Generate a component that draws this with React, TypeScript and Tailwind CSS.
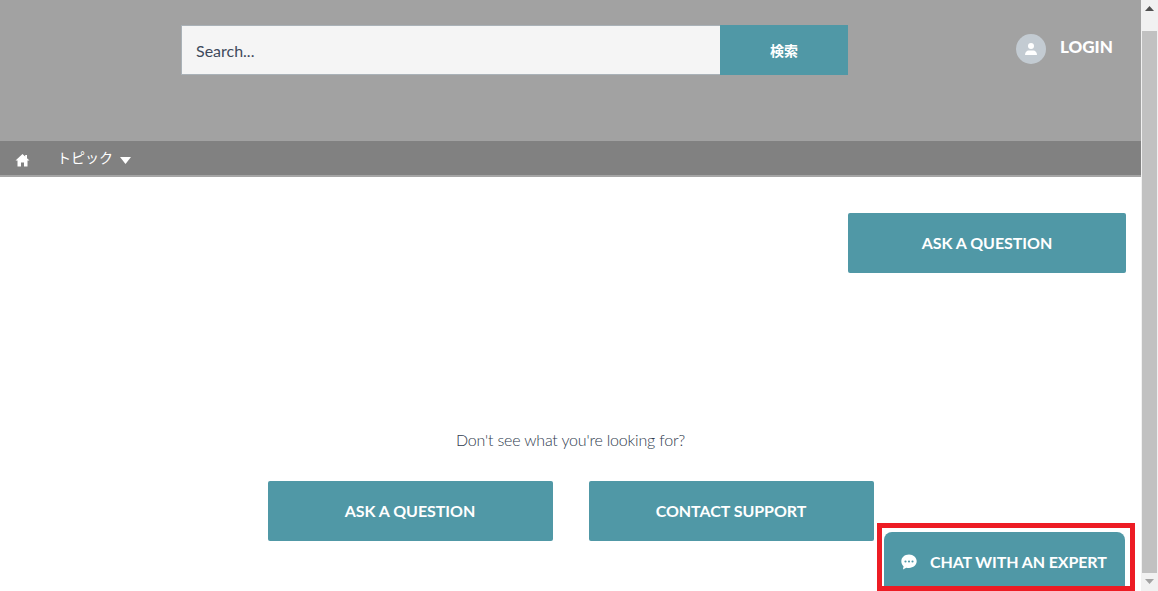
export default function App() {
  const btn = "flex items-center justify-center bg-[#5098a6] text-white font-bold text-[16px] rounded-[2px] h-[60px] tracking-[-0.05px]";
  return (
    <div className="relative flex h-[591px] w-[1158px] overflow-hidden bg-white font-['Lato','Noto_Sans_CJK_JP',sans-serif]">
      <div className="flex w-[1141px] flex-col">
        <header className="flex h-[141px] items-start bg-[#a2a2a2] pl-[181px] pt-[25px]">
          <div className="flex h-[50px] w-[667px]">
            <div className="flex w-[539px] items-center border border-[#aab2b8] border-r-0 bg-[#f5f5f5] pl-[14px] pt-[1px] text-[16px] text-[#3e4a5c]">Search...</div>
            <div className="flex flex-1 items-center justify-center bg-[#5098a6] text-[14px] font-bold text-white">検索</div>
          </div>
          <div className="ml-[168px] mt-[9px] flex items-center">
            <div className="flex h-[30px] w-[30px] items-center justify-center rounded-full bg-[#c3cbd2]">
              <svg width="14" height="14" viewBox="0 0 14 14" fill="white">
                <circle cx="7" cy="4" r="3" />
                <path d="M1 13c0-3 2-4.500 3.500-4.500h5C11 8.500 13 10 13 13z" />
              </svg>
            </div>
            <span className="ml-[14px] -mt-[4px] text-[17px] font-black text-white">LOGIN</span>
          </div>
        </header>
        <nav className="flex h-[36px] items-center border-b-2 border-[#a5a5a5] bg-[#818181] text-white">
          <svg className="ml-[15px] mt-[4px]" width="15" height="14" viewBox="0 0 15 14" fill="white">
            <path d="M7.500 1 0.500 7.500h2V13.500h3.500v-4h3v4H12.500V7.500h2L12 5.200V2h-1.800v1.500z" />
          </svg>
          <span className="ml-[27px] -mt-[2px] text-[14px]">トピック</span>
          <svg className="ml-[7px] mt-[4px]" width="11" height="7" viewBox="0 0 11 7" fill="white">
            <path d="M0 0h11L5.500 7z" />
          </svg>
        </nav>
        <main className="flex flex-1 flex-col">
          <div className="flex justify-end pr-[15px] pt-[36px]">
            <div className={`${btn} w-[278px]`}>ASK A QUESTION</div>
          </div>
          <p className="mt-[156px] text-center text-[16px] font-light leading-[22px] tracking-[-0.18px] text-[#2f3b4e]">Don't see what you're looking for?</p>
          <div className="mt-[30px] flex justify-center gap-[36px]">
            <div className={`${btn} w-[285px]`}>ASK A QUESTION</div>
            <div className={`${btn} w-[285px]`}>CONTACT SUPPORT</div>
          </div>
        </main>
      </div>
      <div className="flex w-[17px] flex-col items-center bg-[#f1f1f1]">
        <svg className="mt-[6px]" width="9" height="5" viewBox="0 0 9 5" fill="#505050"><path d="M4.500 0 9 5H0z" /></svg>
        <div className="mt-[20px] h-[542px] w-[15px] bg-[#c1c1c1]" />
        <svg className="mt-[6px]" width="9" height="5" viewBox="0 0 9 5" fill="#a3a3a3"><path d="M0 0h9L4.500 5z" /></svg>
      </div>
      <div className="absolute left-[877px] top-[523px] h-[68px] w-[258px] border-[5px] border-[#ed1c24]">
        <div className="ml-[2px] mt-[4px] flex h-[54px] w-[241px] items-center rounded-t-[8px] bg-[#5098a6] pl-[17px] pt-[6px] text-[16px] font-bold tracking-[-0.1px] text-white">
          <svg width="16" height="16" viewBox="0 0 15 15" fill="white">
            <path d="M7.500 0.500C3.400 0.500 0.300 3.200 0.300 6.900c0 1.900.8 3.500 2.100 4.600L1.800 14.500l3.200-1.700c.8.200 1.600.3 2.500.3 4.100 0 7.200-2.700 7.200-6.200S11.600.500 7.500.500z" />
            <circle cx="4.200" cy="7" r="1" fill="#5098a6" />
            <circle cx="7.500" cy="7" r="1" fill="#5098a6" />
            <circle cx="10.800" cy="7" r="1" fill="#5098a6" />
          </svg>
          <span className="ml-[13px]">CHAT WITH AN EXPERT</span>
        </div>
      </div>
    </div>
  );
}
